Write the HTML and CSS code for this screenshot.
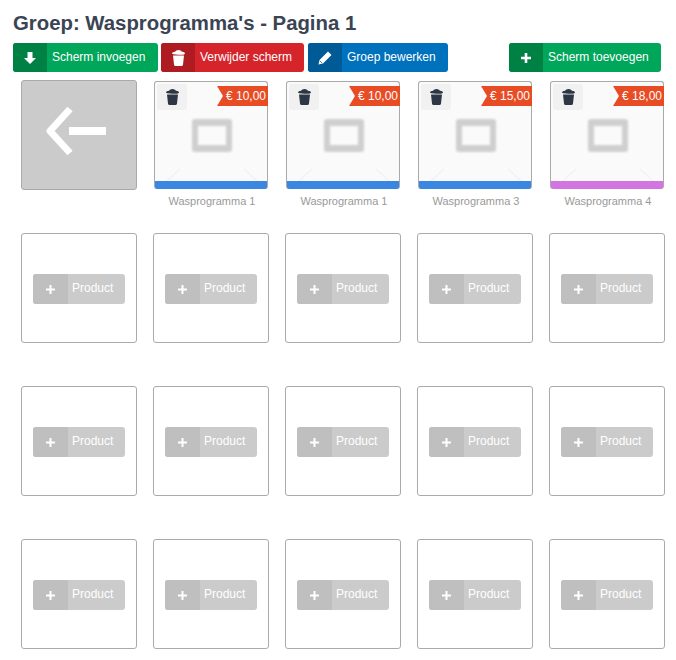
FILE: index.html
```html
<!DOCTYPE html>
<html>
<head>
    <meta charset="utf-8" />
    <title>Groep</title>
    <link rel="stylesheet" href="styles.css">
</head>
<body>
    <h1>Groep: Wasprogramma's - Pagina 1</h1>

    <div class="toolbar">
        <a class="btn green w145"><span class="btnIcon"><svg width="12" height="12" viewBox="0 0 12 12"><path d="M3.500 0h5v6H12l-6 6-6-6h3.500z" fill="#fff"/></svg></span>Scherm invoegen</a>
        <a class="btn red w143"><span class="btnIcon"><svg width="13" height="16" viewBox="0 0 13 16"><path d="M1 5.500h11l-1 9q-.2 1.500-1.500 1.500h-6Q2.200 16 2 14.500zM0 3.500Q0 2 3 1.800 4 0 6.500 0T10 1.800q3 .2 3 1.700T6.500 4.700 0 3.500z" fill="#fff"/></svg></span>Verwijder scherm</a>
        <a class="btn blue w140"><span class="btnIcon"><svg width="14" height="14" viewBox="0 0 14 14"><path d="M10 .5l3.500 3.500-8.500 8.500L.5 13.500 1.500 9z" fill="#fff"/><path d="M1.800 9.800l2.400 2.400" stroke="#005a96" stroke-width=".8"/></svg></span>Groep bewerken</a>
        <a class="btn green w152 pushRight"><span class="btnIcon"><svg width="10" height="10" viewBox="0 0 10 10"><path d="M3.700 0h2.600v3.700H10v2.600H6.300V10H3.700V6.300H0V3.700h3.700z" fill="#fff"/></svg></span>Scherm toevoegen</a>
    </div>

    <div class="grid">
        <div class="cell">
            <div class="backCard">
                <svg class="backArrow" width="60" height="52" viewBox="0 0 60 52"><path d="M24 4L4 26l20 22" fill="none" stroke="#fff" stroke-width="7" stroke-linejoin="round"/><path d="M23 22h37v8H23z" fill="#fff"/></svg>
            </div>
        </div>

        <div class="cell">
            <div class="productCard">
                <span class="trash"><svg width="13" height="16" viewBox="0 0 13 16"><path d="M1 5.500h11l-1 9q-.2 1.500-1.500 1.500h-6Q2.200 16 2 14.500zM0 3.500Q0 2 3 1.800 4 0 6.500 0T10 1.800q3 .2 3 1.700T6.500 4.700 0 3.500z" fill="#2c3644"/></svg></span>
                <span class="price">€ 10,00</span>
                <span class="thumb"></span>
                <svg class="corners" width="112" height="14" viewBox="0 0 112 14"><path d="M11 14L25 1M89 1l14 13" stroke="#ececec" fill="none"/></svg>
                <span class="colorBar blueBar"></span>
            </div>
            <div class="caption">Wasprogramma 1</div>
        </div>
        <div class="cell">
            <div class="productCard">
                <span class="trash"><svg width="13" height="16" viewBox="0 0 13 16"><path d="M1 5.500h11l-1 9q-.2 1.500-1.500 1.500h-6Q2.200 16 2 14.500zM0 3.500Q0 2 3 1.800 4 0 6.500 0T10 1.800q3 .2 3 1.700T6.500 4.700 0 3.500z" fill="#2c3644"/></svg></span>
                <span class="price">€ 10,00</span>
                <span class="thumb"></span>
                <svg class="corners" width="112" height="14" viewBox="0 0 112 14"><path d="M11 14L25 1M89 1l14 13" stroke="#ececec" fill="none"/></svg>
                <span class="colorBar blueBar"></span>
            </div>
            <div class="caption">Wasprogramma 1</div>
        </div>
        <div class="cell">
            <div class="productCard">
                <span class="trash"><svg width="13" height="16" viewBox="0 0 13 16"><path d="M1 5.500h11l-1 9q-.2 1.500-1.500 1.500h-6Q2.200 16 2 14.500zM0 3.500Q0 2 3 1.800 4 0 6.500 0T10 1.800q3 .2 3 1.700T6.500 4.700 0 3.500z" fill="#2c3644"/></svg></span>
                <span class="price">€ 15,00</span>
                <span class="thumb"></span>
                <svg class="corners" width="112" height="14" viewBox="0 0 112 14"><path d="M11 14L25 1M89 1l14 13" stroke="#ececec" fill="none"/></svg>
                <span class="colorBar blueBar"></span>
            </div>
            <div class="caption">Wasprogramma 3</div>
        </div>
        <div class="cell">
            <div class="productCard">
                <span class="trash"><svg width="13" height="16" viewBox="0 0 13 16"><path d="M1 5.500h11l-1 9q-.2 1.500-1.500 1.500h-6Q2.200 16 2 14.500zM0 3.500Q0 2 3 1.800 4 0 6.500 0T10 1.800q3 .2 3 1.700T6.500 4.700 0 3.500z" fill="#2c3644"/></svg></span>
                <span class="price">€ 18,00</span>
                <span class="thumb"></span>
                <svg class="corners" width="112" height="14" viewBox="0 0 112 14"><path d="M11 14L25 1M89 1l14 13" stroke="#ececec" fill="none"/></svg>
                <span class="colorBar purpleBar"></span>
            </div>
            <div class="caption">Wasprogramma 4</div>
        </div>

        <div class="cell"><div class="emptyCard"><a class="addBtn"><span class="addIcon"><svg width="9" height="9" viewBox="0 0 9 9"><path d="M3.500 0h2v3.500H9v2H5.500V9h-2V5.500H0v-2h3.500z" fill="#fff"/></svg></span><span class="addText">Product</span></a></div></div>
        <div class="cell"><div class="emptyCard"><a class="addBtn"><span class="addIcon"><svg width="9" height="9" viewBox="0 0 9 9"><path d="M3.500 0h2v3.500H9v2H5.500V9h-2V5.500H0v-2h3.500z" fill="#fff"/></svg></span><span class="addText">Product</span></a></div></div>
        <div class="cell"><div class="emptyCard"><a class="addBtn"><span class="addIcon"><svg width="9" height="9" viewBox="0 0 9 9"><path d="M3.500 0h2v3.500H9v2H5.500V9h-2V5.500H0v-2h3.500z" fill="#fff"/></svg></span><span class="addText">Product</span></a></div></div>
        <div class="cell"><div class="emptyCard"><a class="addBtn"><span class="addIcon"><svg width="9" height="9" viewBox="0 0 9 9"><path d="M3.500 0h2v3.500H9v2H5.500V9h-2V5.500H0v-2h3.500z" fill="#fff"/></svg></span><span class="addText">Product</span></a></div></div>
        <div class="cell"><div class="emptyCard"><a class="addBtn"><span class="addIcon"><svg width="9" height="9" viewBox="0 0 9 9"><path d="M3.500 0h2v3.500H9v2H5.500V9h-2V5.500H0v-2h3.500z" fill="#fff"/></svg></span><span class="addText">Product</span></a></div></div>

        <div class="cell"><div class="emptyCard"><a class="addBtn"><span class="addIcon"><svg width="9" height="9" viewBox="0 0 9 9"><path d="M3.500 0h2v3.500H9v2H5.500V9h-2V5.500H0v-2h3.500z" fill="#fff"/></svg></span><span class="addText">Product</span></a></div></div>
        <div class="cell"><div class="emptyCard"><a class="addBtn"><span class="addIcon"><svg width="9" height="9" viewBox="0 0 9 9"><path d="M3.500 0h2v3.500H9v2H5.500V9h-2V5.500H0v-2h3.500z" fill="#fff"/></svg></span><span class="addText">Product</span></a></div></div>
        <div class="cell"><div class="emptyCard"><a class="addBtn"><span class="addIcon"><svg width="9" height="9" viewBox="0 0 9 9"><path d="M3.500 0h2v3.500H9v2H5.500V9h-2V5.500H0v-2h3.500z" fill="#fff"/></svg></span><span class="addText">Product</span></a></div></div>
        <div class="cell"><div class="emptyCard"><a class="addBtn"><span class="addIcon"><svg width="9" height="9" viewBox="0 0 9 9"><path d="M3.500 0h2v3.500H9v2H5.500V9h-2V5.500H0v-2h3.500z" fill="#fff"/></svg></span><span class="addText">Product</span></a></div></div>
        <div class="cell"><div class="emptyCard"><a class="addBtn"><span class="addIcon"><svg width="9" height="9" viewBox="0 0 9 9"><path d="M3.500 0h2v3.500H9v2H5.500V9h-2V5.500H0v-2h3.500z" fill="#fff"/></svg></span><span class="addText">Product</span></a></div></div>

        <div class="cell"><div class="emptyCard"><a class="addBtn"><span class="addIcon"><svg width="9" height="9" viewBox="0 0 9 9"><path d="M3.500 0h2v3.500H9v2H5.500V9h-2V5.500H0v-2h3.500z" fill="#fff"/></svg></span><span class="addText">Product</span></a></div></div>
        <div class="cell"><div class="emptyCard"><a class="addBtn"><span class="addIcon"><svg width="9" height="9" viewBox="0 0 9 9"><path d="M3.500 0h2v3.500H9v2H5.500V9h-2V5.500H0v-2h3.500z" fill="#fff"/></svg></span><span class="addText">Product</span></a></div></div>
        <div class="cell"><div class="emptyCard"><a class="addBtn"><span class="addIcon"><svg width="9" height="9" viewBox="0 0 9 9"><path d="M3.500 0h2v3.500H9v2H5.500V9h-2V5.500H0v-2h3.500z" fill="#fff"/></svg></span><span class="addText">Product</span></a></div></div>
        <div class="cell"><div class="emptyCard"><a class="addBtn"><span class="addIcon"><svg width="9" height="9" viewBox="0 0 9 9"><path d="M3.500 0h2v3.500H9v2H5.500V9h-2V5.500H0v-2h3.500z" fill="#fff"/></svg></span><span class="addText">Product</span></a></div></div>
        <div class="cell"><div class="emptyCard"><a class="addBtn"><span class="addIcon"><svg width="9" height="9" viewBox="0 0 9 9"><path d="M3.500 0h2v3.500H9v2H5.500V9h-2V5.500H0v-2h3.500z" fill="#fff"/></svg></span><span class="addText">Product</span></a></div></div>
    </div>
</body>
</html>
```

FILE: styles.css
```css
body {
    margin: 0;
    padding: 12px 15px 0 13px;
    background: white;
    font-family: "Liberation Sans", Arial, sans-serif;
}

h1 {
    margin: 0 0 8px 0;
    height: 23px;
    line-height: 23px;
    font-size: 20.35px;
    font-weight: bold;
    color: #3a4453;
}

.toolbar {
    display: flex;
    gap: 3px;
    height: 29px;
    margin-bottom: 8px;
}

.btn {
    display: flex;
    align-items: center;
    border-radius: 3px;
    color: white;
    font-size: 12px;
    line-height: 27px;
    overflow: hidden;
}

.w145 { width: 145px; }
.w143 { width: 143px; }
.w140 { width: 140px; margin-left: 1px; }
.w152 { width: 152px; }

.pushRight {
    margin-left: auto;
    margin-right: 0;
}

.btnIcon {
    display: flex;
    align-items: center;
    justify-content: center;
    width: 34px;
    height: 100%;
    margin-right: 5px;
}

.green { background: #00a65a; }
.green .btnIcon { background: #008144; }
.red { background: #d6242b; }
.red .btnIcon { background: #ae1c22; }
.blue { background: #0071bc; }
.blue .btnIcon { background: #005a96; }

.grid {
    display: grid;
    grid-template-columns: repeat(5, 116px);
    grid-auto-rows: 153px;
    column-gap: 16px;
    margin-left: 8px;
}

.backCard {
    display: flex;
    align-items: center;
    justify-content: center;
    height: 110px;
    box-sizing: border-box;
    background: #cbcbcb;
    border: 1px solid #aaa;
    border-radius: 3px;
}

.backArrow {
    margin: 0 6px 8px 0;
}

.productCard {
    position: relative;
    height: 108px;
    margin: 1px 1px 0 1px;
    box-sizing: border-box;
    background: #fafafa;
    border: 1px solid #aaa;
    border-bottom: 0;
    border-radius: 3px;
}

.trash {
    position: absolute;
    left: 2px;
    top: 2px;
    width: 30px;
    height: 26px;
    display: flex;
    align-items: center;
    justify-content: center;
    background: #f1f1f1;
    border-radius: 2px;
}

.price {
    position: absolute;
    right: -1px;
    top: 4px;
    width: 51px;
    height: 20px;
    box-sizing: border-box;
    padding-right: 2px;
    text-align: right;
    line-height: 20px;
    font-size: 12px;
    color: white;
    background: #e84c24;
    clip-path: polygon(0 0, 100% 0, 100% 100%, 0 100%, 6px 50%);
}

.thumb {
    position: absolute;
    left: 37px;
    top: 37px;
    width: 40px;
    height: 33px;
    box-sizing: border-box;
    border: solid #cfcfcf;
    border-width: 7px 6px;
    border-radius: 3px;
    filter: blur(1px);
}

.corners {
    position: absolute;
    left: 0;
    bottom: 7px;
}

.colorBar {
    position: absolute;
    left: 0;
    right: 0;
    bottom: 0;
    height: 8px;
    border-radius: 0 0 2px 2px;
}

.blueBar { background: #3b86e0; }
.purpleBar { background: #d175e0; }

.caption {
    margin-top: 6px;
    padding-left: 2px;
    text-align: center;
    font-size: 11px;
    color: #999;
}

.emptyCard {
    display: flex;
    align-items: center;
    justify-content: center;
    height: 110px;
    box-sizing: border-box;
    border: 1px solid #aaa;
    border-radius: 3px;
}

.addBtn {
    display: flex;
    width: 92px;
    height: 30px;
    margin-top: 2px;
    border-radius: 3px;
    overflow: hidden;
    background: #cbcbcb;
    color: white;
    font-size: 12px;
}

.addIcon {
    display: flex;
    align-items: center;
    justify-content: center;
    width: 35px;
    background: #bfbfbf;
    margin-right: 4px;
}

.addText {
    line-height: 28px;
}
```
